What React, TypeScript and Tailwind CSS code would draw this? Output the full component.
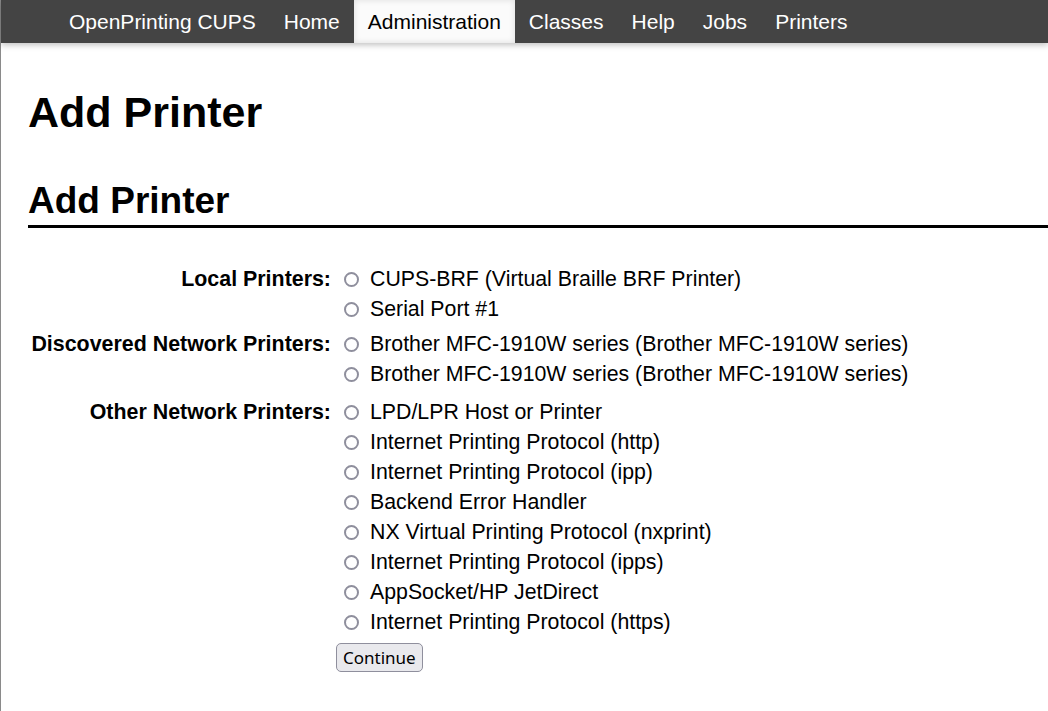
const navItems = ["Home", "Administration", "Classes", "Help", "Jobs", "Printers"];

type Group = {
  label: string;
  options: string[];
  mt: string;
};

const groups: Group[] = [
  {
    label: "Local Printers:",
    options: ["CUPS-BRF (Virtual Braille BRF Printer)", "Serial Port #1"],
    mt: "mt-0",
  },
  {
    label: "Discovered Network Printers:",
    options: [
      "Brother MFC-1910W series (Brother MFC-1910W series)",
      "Brother MFC-1910W series (Brother MFC-1910W series)",
    ],
    mt: "mt-[5px]",
  },
  {
    label: "Other Network Printers:",
    options: [
      "LPD/LPR Host or Printer",
      "Internet Printing Protocol (http)",
      "Internet Printing Protocol (ipp)",
      "Backend Error Handler",
      "NX Virtual Printing Protocol (nxprint)",
      "Internet Printing Protocol (ipps)",
      "AppSocket/HP JetDirect",
      "Internet Printing Protocol (https)",
    ],
    mt: "mt-[8px]",
  },
];

function Radio() {
  return (
    <span className="inline-block w-[15px] h-[15px] rounded-full border-2 border-[#8f8f9d] bg-white shrink-0" />
  );
}

export default function App() {
  return (
    <div
      className="min-h-[711px] bg-white text-black border-l border-[#8a8a8a]"
      style={{ fontFamily: '"Liberation Sans", Arial, sans-serif' }}
    >
      <header className="relative z-10 flex h-[43px] bg-[#444444] pl-[54px] shadow-[0_2px_6px_rgba(0,0,0,0.25)]">
        <a className="px-[14px] leading-[43px] text-[21px] text-white">OpenPrinting CUPS</a>
        {navItems.map((item) =>
          item === "Administration" ? (
            <a
              key={item}
              className="px-[14px] leading-[43px] text-[21px] text-black bg-[#fbfbfb] shadow-[inset_0_0_6px_rgba(0,0,0,0.12)]"
            >
              {item}
            </a>
          ) : (
            <a key={item} className="px-[14px] leading-[43px] text-[21px] text-white">
              {item}
            </a>
          )
        )}
      </header>

      <main className="px-[27px]">
        <h1 className="mt-[48px] text-[43px] leading-none font-bold">Add Printer</h1>
        <h2 className="mt-[48px] text-[37px] leading-none font-bold pb-[6px] border-b-[3px] border-black -mr-[27px]">
          Add Printer
        </h2>

        <form className="mt-[36px]">
          {groups.map((g) => (
            <div key={g.label} className={`grid grid-cols-[303px_1fr] gap-x-[13px] ${g.mt}`}>
              <div className="text-right font-bold text-[21.4px] leading-[30px]">{g.label}</div>
              <div>
                {g.options.map((opt, i) => (
                  <label key={i} className="flex items-center h-[30px] text-[21.3px] leading-[30px]">
                    <Radio />
                    <span className="ml-[11px]">{opt}</span>
                  </label>
                ))}
              </div>
            </div>
          ))}
          <div className="grid grid-cols-[303px_1fr] gap-x-[13px] mt-[6px]">
            <div />
            <div>
              <button
                type="button"
                className="-ml-[8px] h-[29px] px-[6px] rounded-[5px] border border-[#8f8f9d] bg-[#e9e9ed] text-[17px] text-black"
                style={{ fontFamily: '"Noto Sans", sans-serif' }}
              >
                Continue
              </button>
            </div>
          </div>
        </form>
      </main>
    </div>
  );
}
